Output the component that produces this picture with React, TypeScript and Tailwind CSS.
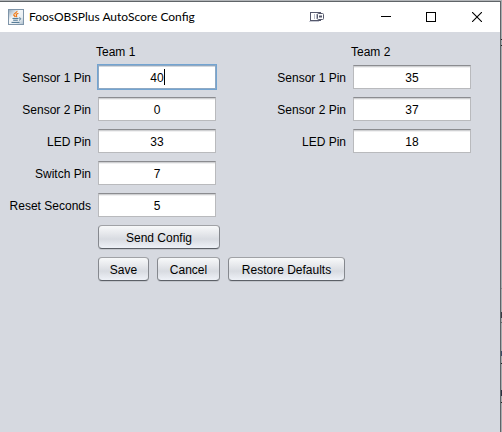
import { useState } from "react";

type Field = { id: string; label: string; value: string; active?: boolean };

const team1: Field[] = [
  { id: "t1-sensor1", label: "Sensor 1 Pin", value: "40", active: true },
  { id: "t1-sensor2", label: "Sensor 2 Pin", value: "0" },
  { id: "t1-led", label: "LED Pin", value: "33" },
  { id: "t1-switch", label: "Switch Pin", value: "7" },
  { id: "t1-reset", label: "Reset Seconds", value: "5" },
];

const team2: Field[] = [
  { id: "t2-sensor1", label: "Sensor 1 Pin", value: "35" },
  { id: "t2-sensor2", label: "Sensor 2 Pin", value: "37" },
  { id: "t2-led", label: "LED Pin", value: "18" },
];

function PinField({ field }: { field: Field }) {
  const [value, setValue] = useState(field.value);
  return (
    <div className="flex items-center gap-[7px]">
      <label htmlFor={field.id} className="w-[84px] shrink-0 pt-0.5 text-right whitespace-nowrap">
        {field.label}
      </label>
      <div className="relative h-6 w-[118px]">
        <input
          id={field.id}
          value={value}
          onChange={(e) => setValue(e.target.value)}
          className={
            "block h-6 w-full border bg-white pt-0.5 text-center text-black outline-none " +
            (field.active
              ? "border-[#8fa9c4] shadow-[0_0_0_1px_#73a4d1,inset_0_1px_0_#d5d9de]"
              : "border-[#b9babd] border-t-[#8b8c90] shadow-[inset_0_1px_0_#cfd0d2,inset_0_2px_0_#f0f0f1]")
          }
        />
        {field.active && <span className="absolute top-1 left-1/2 ml-[7px] h-4 w-px bg-black" />}
      </div>
    </div>
  );
}

function Team({ title, fields, children }: { title: string; fields: Field[]; children?: React.ReactNode }) {
  return (
    <section className="w-[209px] shrink-0">
      <h2 className="mb-[5px] pl-[89px]">{title}</h2>
      <div className="flex flex-col gap-2">
        {fields.map((f) => (
          <PinField key={f.id} field={f} />
        ))}
        {children}
      </div>
    </section>
  );
}

function Button({ children, width }: { children: string; width: string }) {
  return (
    <button
      type="button"
      className={
        "h-6 shrink-0 rounded-[4px] border border-[#85888e] border-t-[#a0a2a6] border-b-[#5c6067] bg-linear-to-b from-[#f8f9fa] via-[#d8dbe1] via-60% to-[#eef1f7] pt-0.5 whitespace-nowrap shadow-[0_1px_0_#c2c5cb] " +
        width
      }
    >
      {children}
    </button>
  );
}

function JavaIcon() {
  return (
    <svg width="16" height="16" viewBox="0 0 16 16" fill="none">
      <defs>
        <linearGradient id="tile" x1="0" y1="0" x2="1" y2="1">
          <stop offset="0" stopColor="#8fa5b8" />
          <stop offset="0.4" stopColor="#f4f7f9" />
          <stop offset="0.7" stopColor="#e9eef2" />
          <stop offset="1" stopColor="#a9bccb" />
        </linearGradient>
      </defs>
      <rect x="0.5" y="0.5" width="15" height="15" fill="url(#tile)" stroke="#7f95a9" />
      <path
        d="M9 2C9.4 3.6 5.4 4.4 5.8 6c.3.9 1.2 1.2 1.5 2M10.4 4.4c-2 .5-2.6 1.2-1.9 2.1.4.6.2 1-.3 1.5"
        stroke="#ee7a1a"
        strokeWidth="1.3"
      />
      <path d="M4.5 9.4h6M5.2 11.2h4.6M3.5 13.4h8M11 9c2.4-.4 2.2 1.6 0 2.2" stroke="#47708f" strokeWidth="1" />
    </svg>
  );
}

function TitleBar() {
  return (
    <header className="flex h-[30px] items-center bg-white pl-2">
      <JavaIcon />
      <h1 className="ml-[5px] flex-1 whitespace-nowrap font-[Lato,'Noto_Sans',sans-serif] text-xs">
        FoosOBSPlus AutoScore Config
      </h1>
      <svg className="mr-[38px]" width="16" height="10" viewBox="0 0 16 10" fill="none">
        <path d="M0 9.5h10" stroke="#c7c9d3" />
        <rect x="1.5" y="0.5" width="10" height="8" fill="#fff" stroke="#55586c" />
        <path d="M5.5 2v5M7.5 2v5" stroke="#b7bac6" />
        <rect x="8.5" y="1.5" width="6" height="6" rx="1" fill="#fff" stroke="#55586c" />
        <path d="M10 4.5h3" stroke="#55586c" strokeWidth="2" />
      </svg>
      <button type="button" aria-label="Minimize" className="flex h-full w-[45px] items-center justify-center">
        <svg width="10" height="10" viewBox="0 0 10 10">
          <path d="M0 4.5h10" stroke="#000" />
        </svg>
      </button>
      <button type="button" aria-label="Maximize" className="flex h-full w-[45px] items-center justify-center">
        <svg width="10" height="10" viewBox="0 0 10 10" fill="none">
          <rect x="0.5" y="0.5" width="9" height="9" stroke="#000" />
        </svg>
      </button>
      <button type="button" aria-label="Close" className="flex h-full w-[47px] items-center justify-center">
        <svg width="10" height="10" viewBox="0 0 10 10">
          <path d="M0 0l10 10M10 0L0 10" stroke="#000" strokeWidth="1.1" />
        </svg>
      </button>
    </header>
  );
}

/* Sliver of the window lying behind this one, with its row lines. */
function BackdropEdge() {
  return (
    <div className="flex w-px flex-col bg-[#a9acaf] pt-[39px]" aria-hidden="true">
      <div className="h-[7px] border-y border-[#222]" />
      <div className="mt-[242px] h-px bg-[#85888b]" />
      <div className="mt-[23px] h-[6px] bg-[#3a3a44]" />
      <div className="mt-[4px] h-px bg-[#606366]" />
      <div className="mt-[28px] h-[5px] bg-[#3c4a66]" />
      <div className="mt-[7px] h-px bg-[#222]" />
      <div className="mt-[26px] h-[6px] bg-[#2c3040]" />
      <div className="mt-[6px] h-px bg-[#222]" />
    </div>
  );
}

export default function App() {
  return (
    <div className="flex min-h-screen bg-[#b3b6b9] font-['Liberation_Sans',Arial,sans-serif] text-xs text-black">
      <main className="mt-px flex flex-1 flex-col border-t border-r border-[#5f6468] bg-[#d6d9e0]">
        <TitleBar />
        <form className="flex gap-[46px] pt-3 pl-[7px]">
          <Team title="Team 1" fields={team1}>
            <div className="flex flex-col gap-2 pl-[91px]">
              <Button width="w-[122px]">Send Config</Button>
              <div className="flex gap-2">
                <Button width="w-[51px]">Save</Button>
                <Button width="w-[63px]">Cancel</Button>
                <Button width="w-[117px]">Restore Defaults</Button>
              </div>
            </div>
          </Team>
          <Team title="Team 2" fields={team2} />
        </form>
      </main>
      <BackdropEdge />
    </div>
  );
}
